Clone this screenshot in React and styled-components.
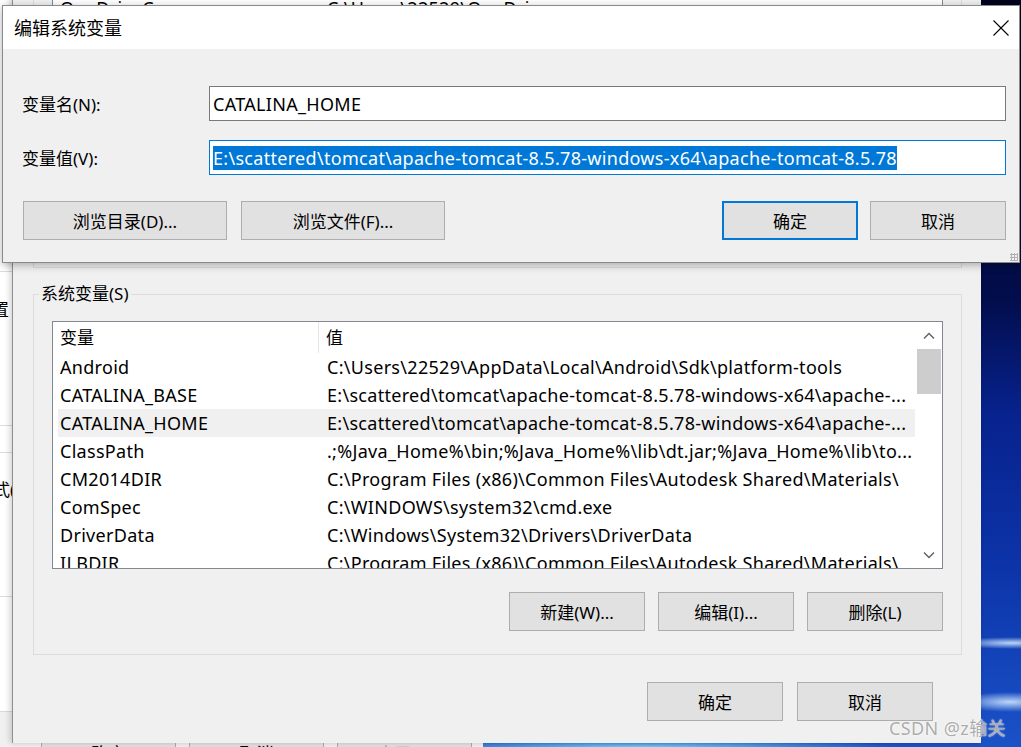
import styled, { createGlobalStyle } from "styled-components";

const UI_FONT = `"Noto Sans", "Noto Sans CJK SC", sans-serif`;

const GlobalStyle = createGlobalStyle`
  html, body {
    margin: 0;
    padding: 0;
    background: #000;
    overflow: hidden;
  }
  * {
    box-sizing: border-box;
  }
`;

const userRows = [{ name: "OneDriveConsumer", value: "C:\\Users\\22529\\OneDrive" }];

const systemRows = [
  { name: "Android", value: "C:\\Users\\22529\\AppData\\Local\\Android\\Sdk\\platform-tools" },
  { name: "CATALINA_BASE", value: "E:\\scattered\\tomcat\\apache-tomcat-8.5.78-windows-x64\\apache-..." },
  { name: "CATALINA_HOME", value: "E:\\scattered\\tomcat\\apache-tomcat-8.5.78-windows-x64\\apache-...", selected: true },
  { name: "ClassPath", value: ".;%Java_Home%\\bin;%Java_Home%\\lib\\dt.jar;%Java_Home%\\lib\\to..." },
  { name: "CM2014DIR", value: "C:\\Program Files (x86)\\Common Files\\Autodesk Shared\\Materials\\" },
  { name: "ComSpec", value: "C:\\WINDOWS\\system32\\cmd.exe" },
  { name: "DriverData", value: "C:\\Windows\\System32\\Drivers\\DriverData" },
  { name: "ILBDIR", value: "C:\\Program Files (x86)\\Common Files\\Autodesk Shared\\Materials\\" },
];

const CloseIcon = () => (
  <svg width="16" height="16" viewBox="0 0 16 16">
    <path d="M0.5 0.5 L15.5 15.5 M15.5 0.5 L0.5 15.5" stroke="#000" strokeWidth="1.1" fill="none" />
  </svg>
);

const Chevron = ({ down }) => (
  <svg width="12" height="8" viewBox="0 0 12 8">
    <path
      d={down ? "M1 1.5 L6 6.5 L11 1.5" : "M1 6.5 L6 1.5 L11 6.5"}
      stroke="#606060"
      strokeWidth="1.4"
      fill="none"
    />
  </svg>
);

// 桌面壁纸上的光带
const WallpaperArt = () => (
  <svg width="1021" height="747" viewBox="0 0 1021 747" preserveAspectRatio="none">
    <defs>
      <linearGradient id="sky" x1="0" y1="0" x2="0" y2="1">
        <stop offset="0" stopColor="#00041c" />
        <stop offset="0.4" stopColor="#020d4c" />
        <stop offset="0.55" stopColor="#07228c" />
        <stop offset="0.75" stopColor="#0c33a8" />
        <stop offset="1" stopColor="#1a52c8" />
      </linearGradient>
      <radialGradient id="glow">
        <stop offset="0" stopColor="#cfe6ff" stopOpacity="0.9" />
        <stop offset="1" stopColor="#cfe6ff" stopOpacity="0" />
      </radialGradient>
      <radialGradient id="cyan">
        <stop offset="0" stopColor="#7fe0ff" stopOpacity="0.95" />
        <stop offset="1" stopColor="#7fe0ff" stopOpacity="0" />
      </radialGradient>
    </defs>
    <rect width="1021" height="747" fill="url(#sky)" />
    <ellipse cx="1012" cy="643" rx="60" ry="6" fill="url(#glow)" />
    <ellipse cx="1010" cy="702" rx="55" ry="10" fill="url(#glow)" />
    <ellipse cx="640" cy="748" rx="260" ry="10" fill="url(#cyan)" />
  </svg>
);

const App = () => {
  return (
    <>
      <GlobalStyle />
      <Desktop>
        <Wallpaper>
          <WallpaperArt />
        </Wallpaper>

        {/* 系统属性窗口（最底层，只露出左边一条和底部按钮） */}
        <SysWindow>
          <TabPage>
            <TabSection $height={272} />
            <TabSection $height={154}>
              <GhostLabel $top={26} $right={9}>性能选项设置</GhostLabel>
            </TabSection>
            <TabGap />
            <TabSection $height={145} $top>
              <GhostLabel $top={25} $right={15}>系统启动方式(</GhostLabel>
            </TabSection>
          </TabPage>
          <SysButtons>
            <SysButton>确定</SysButton>
            <SysButton>取消</SysButton>
            <SysButton $disabled>应用(A)</SysButton>
          </SysButtons>
        </SysWindow>

        {/* 环境变量窗口 */}
        <EnvWindow>
          <UserGroup>
            <ListBox $height={240}>
              <ListBody>
                {userRows.map((r) => (
                  <Row key={r.name}>
                    <Cell>{r.name}</Cell>
                    <Cell>{r.value}</Cell>
                  </Row>
                ))}
              </ListBody>
              <ScrollBar />
            </ListBox>
          </UserGroup>

          <SysGroup>
            <Legend>系统变量(S)</Legend>
            <ListBox $height={248}>
              <ListBody>
                <Header>
                  <HeaderCell $divider>变量</HeaderCell>
                  <HeaderCell>值</HeaderCell>
                </Header>
                {systemRows.map((r) => (
                  <Row key={r.name} $selected={r.selected}>
                    <Cell>{r.name}</Cell>
                    <Cell>{r.value}</Cell>
                  </Row>
                ))}
              </ListBody>
              <ScrollBar>
                <ArrowBox>
                  <Chevron />
                </ArrowBox>
                <Thumb />
                <Track />
                <ArrowBox>
                  <Chevron down />
                </ArrowBox>
              </ScrollBar>
            </ListBox>
            <GroupButtons>
              <Button $width={136}>新建(W)...</Button>
              <Button $width={136}>编辑(I)...</Button>
              <Button $width={136}>删除(L)</Button>
            </GroupButtons>
          </SysGroup>

          <FooterButtons>
            <Button $width={136}>确定</Button>
            <Button $width={136}>取消</Button>
          </FooterButtons>
        </EnvWindow>

        {/* 编辑系统变量对话框 */}
        <Dialog>
          <TitleBar>
            <Title>编辑系统变量</Title>
            <CloseButton>
              <CloseIcon />
            </CloseButton>
          </TitleBar>
          <DialogBody>
            <Form>
              <FieldLabel>变量名(N):</FieldLabel>
              <TextBox>CATALINA_HOME</TextBox>
              <FieldLabel>变量值(V):</FieldLabel>
              <TextBox $focused>
                <Selection>E:\scattered\tomcat\apache-tomcat-8.5.78-windows-x64\apache-tomcat-8.5.78</Selection>
              </TextBox>
            </Form>
            <DialogButtons>
              <ButtonGroup $gap={14}>
                <Button $width={204}>浏览目录(D)...</Button>
                <Button $width={204}>浏览文件(F)...</Button>
              </ButtonGroup>
              <ButtonGroup $gap={12}>
                <Button $width={136} $default>确定</Button>
                <Button $width={136}>取消</Button>
              </ButtonGroup>
            </DialogButtons>
          </DialogBody>
          <ResizeGrip />
        </Dialog>

        <Watermark>CSDN @z输关</Watermark>
      </Desktop>
    </>
  );
};

// 桌面
const Desktop = styled.div`
  position: relative;
  width: 1021px;
  height: 747px;
  overflow: hidden;
  font-family: ${UI_FONT};
  background: #020d4c;
`;

const Wallpaper = styled.div`
  position: absolute;
  inset: 0;
  line-height: 0;

  svg {
    display: block;
  }
`;

// 系统属性窗口
const SysWindow = styled.div`
  position: absolute;
  left: -300px;
  top: 0;
  width: 783px;
  height: 800px;
  background: #f0f0f0;
  display: flex;
  flex-direction: column;
`;

const TabPage = styled.div`
  height: 712px;
  background: #fff;
  border-bottom: 1px solid #d9d9d9;
  display: flex;
  flex-direction: column;
`;

const TabSection = styled.div`
  height: ${(p) => p.$height}px;
  border-bottom: 1px solid #dcdcdc;
  ${(p) => p.$top && "border-top: 1px solid #dcdcdc;"}
`;

const TabGap = styled.div`
  height: 26px;
`;

const GhostLabel = styled.div`
  margin-top: ${(p) => p.$top}px;
  width: ${(p) => 300 + p.$right}px;
  text-align: right;
  font-size: 17px;
  line-height: 24px;
  color: #000;
  white-space: nowrap;
  overflow: hidden;
`;

const SysButtons = styled.div`
  margin-top: 21px;
  display: flex;
  justify-content: flex-end;
  gap: 13px;
  padding-right: 11px;
`;

const SysButton = styled.div`
  width: 135px;
  height: 39px;
  background: #e1e1e1;
  border: 1px solid #adadad;
  display: flex;
  align-items: center;
  justify-content: center;
  font-size: 17px;
  color: ${(p) => (p.$disabled ? "#a0a0a0" : "#000")};
`;

// 环境变量窗口
const EnvWindow = styled.div`
  position: absolute;
  left: 12px;
  top: -20px;
  width: 969px;
  height: 763px;
  background: #f0f0f0;
  border-left: 1px solid #8f8f8f;
  box-shadow: -2px 0 6px rgba(0, 0, 0, 0.18);
  padding: 0 19px 0 20px;
  display: flex;
  flex-direction: column;
`;

const UserGroup = styled.div`
  height: 288px;
  border: 1px solid #dcdcdc;
  border-top: none;
  padding: 13px 18px 0;
`;

const SysGroup = styled.fieldset`
  margin: 15px 0 0;
  padding: 16px 18px 23px;
  border: 1px solid #dcdcdc;
  min-width: 0;
`;

const Legend = styled.legend`
  margin-left: -13px;
  padding: 0 2px;
  font-size: 17px;
  line-height: 22px;
  color: #000;
`;

const ListBox = styled.div`
  height: ${(p) => p.$height}px;
  background: #fff;
  border: 1px solid #828790;
  display: flex;
  overflow: hidden;
`;

const ListBody = styled.div`
  flex: 1;
  min-width: 0;
  display: flex;
  flex-direction: column;
`;

const Header = styled.div`
  height: 31px;
  flex: none;
  display: grid;
  grid-template-columns: 266px 1fr;
`;

const HeaderCell = styled.div`
  padding-left: 7px;
  font-size: 17px;
  line-height: 31px;
  color: #000;
  ${(p) => p.$divider && "border-right: 1px solid #e5e5e5;"}
`;

const Row = styled.div`
  height: 28px;
  flex: none;
  margin-left: 5px;
  display: grid;
  grid-template-columns: 267px 1fr;
  background: ${(p) => (p.$selected ? "#f0f0f0" : "transparent")};
`;

const Cell = styled.div`
  padding-left: 2px;
  font-size: 18px;
  letter-spacing: 0.3px;
  line-height: 28px;
  color: #000;
  white-space: nowrap;
  overflow: hidden;
`;

const ScrollBar = styled.div`
  width: 27px;
  flex: none;
  background: #fff;
  display: flex;
  flex-direction: column;
  align-items: center;
`;

const ArrowBox = styled.div`
  height: 27px;
  width: 100%;
  flex: none;
  display: flex;
  align-items: center;
  justify-content: center;
`;

const Thumb = styled.div`
  width: 24px;
  height: 45px;
  flex: none;
  background: #cdcdcd;
`;

const Track = styled.div`
  flex: 1;
`;

const GroupButtons = styled.div`
  margin-top: 23px;
  display: flex;
  justify-content: flex-end;
  gap: 13px;
`;

const FooterButtons = styled.div`
  margin-top: 27px;
  padding-right: 29px;
  display: flex;
  justify-content: flex-end;
  gap: 14px;
`;

const Button = styled.div`
  width: ${(p) => p.$width}px;
  height: 39px;
  flex: none;
  background: #e1e1e1;
  border: ${(p) => (p.$default ? "2px solid #0078d7" : "1px solid #adadad")};
  display: flex;
  align-items: center;
  justify-content: center;
  font-size: 17px;
  color: #000;
`;

// 编辑系统变量对话框
const Dialog = styled.div`
  position: absolute;
  left: 2px;
  top: 5px;
  width: 1018px;
  height: 258px;
  background: #f0f0f0;
  border: 1px solid #8a8a8a;
  box-shadow: 0 2px 8px rgba(0, 0, 0, 0.3);
  display: flex;
  flex-direction: column;
`;

const TitleBar = styled.div`
  height: 43px;
  flex: none;
  background: #fff;
  display: flex;
  align-items: center;
  justify-content: space-between;
  padding-left: 11px;
`;

const Title = styled.div`
  font-size: 18px;
  color: #000;
  padding-bottom: 2px;
`;

const CloseButton = styled.div`
  width: 36px;
  height: 43px;
  display: flex;
  align-items: center;
  justify-content: center;
`;

const DialogBody = styled.div`
  flex: 1;
  padding: 37px 13px 0 19px;
`;

const Form = styled.div`
  display: grid;
  grid-template-columns: 187px 1fr;
  row-gap: 19px;
  align-items: center;
`;

const FieldLabel = styled.div`
  font-size: 17px;
  color: #000;
`;

const TextBox = styled.div`
  height: 35px;
  background: #fff;
  border: 1px solid ${(p) => (p.$focused ? "#0078d7" : "#7a7a7a")};
  padding-left: 3px;
  display: flex;
  align-items: center;
  font-size: 18px;
  letter-spacing: 0.3px;
  color: #000;
  white-space: nowrap;
  overflow: hidden;
`;

const Selection = styled.span`
  background: #0078d7;
  color: #fff;
  line-height: 24px;
`;

const DialogButtons = styled.div`
  margin-top: 26px;
  padding-left: 1px;
  display: flex;
  justify-content: space-between;
`;

const ButtonGroup = styled.div`
  display: flex;
  gap: ${(p) => p.$gap}px;
`;

const ResizeGrip = styled.div`
  position: absolute;
  right: 1px;
  bottom: 1px;
  width: 8px;
  height: 8px;
  background-image: radial-gradient(circle, #b0b0b0 1px, transparent 1.2px);
  background-size: 3px 3px;
`;

const Watermark = styled.div`
  position: absolute;
  right: 15px;
  bottom: 7px;
  font-family: ${UI_FONT};
  font-size: 18px;
  letter-spacing: 0.4px;
  color: rgba(150, 150, 150, 0.8);
  text-shadow: 0 0 1px #fff, 0 0 2px rgba(255, 255, 255, 0.8);
  white-space: nowrap;
`;

export default App;
